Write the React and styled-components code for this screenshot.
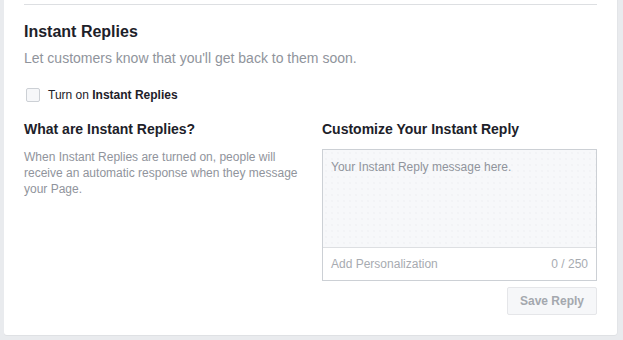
import React from 'react';
import styled, { createGlobalStyle } from 'styled-components';

const GlobalStyle = createGlobalStyle`
  html, body {
    margin: 0;
    padding: 0;
    background: #e9ebee;
  }

  body {
    font-family: "Liberation Sans", Arial, Helvetica, sans-serif;
    color: #1d2129;
  }
`;

const Page = styled.div`
  padding: 0 6px 6px 4px;
`;

const Card = styled.section`
  background: #fff;
  border-radius: 0 0 3px 3px;
  box-shadow: 1px 0 0 #e3e5e8, 0 1px 0 #dfe1e4;
  padding: 4px 20px 20px;
`;

const Divider = styled.hr`
  margin: 0;
  border: 0;
  border-top: 1px solid #dddfe2;
`;

const Title = styled.h2`
  margin: 17px 0 0;
  font-size: 16px;
  line-height: 20px;
  font-weight: bold;
`;

const Subtitle = styled.p`
  margin: 7px 0 0;
  font-size: 14px;
  line-height: 18px;
  color: #90949c;
`;

const Toggle = styled.label`
  display: flex;
  align-items: center;
  gap: 8px;
  margin: 20px 0 0 2px;
  height: 16px;
  font-size: 12px;
  line-height: 16px;
  color: #1d2129;

  b {
    font-weight: bold;
  }
`;

const Box = styled.span`
  width: 12px;
  height: 12px;
  border: 1px solid #ccd0d5;
  border-radius: 2px;
  background: #f6f7f9;
`;

const Columns = styled.div`
  display: grid;
  grid-template-columns: 1fr 275px;
  margin-top: 17px;
`;

const Heading = styled.h3`
  margin: 0 0 11px;
  font-size: 14px;
  line-height: 18px;
  font-weight: bold;
`;

const Description = styled.p`
  margin: 0;
  max-width: 280px;
  font-size: 12px;
  line-height: 16px;
  color: #90949c;
`;

const Editor = styled.div`
  border: 1px solid #ccd0d5;
  background: #fff;
`;

const Message = styled.div`
  height: 97px;
  padding: 9px 8px 0;
  box-sizing: border-box;
  background-color: #f7f8fa;
  background-image: radial-gradient(#eceef1 0.6px, transparent 0.8px);
  background-size: 6px 6px;
  font-size: 12px;
  line-height: 16px;
  color: #90949c;
`;

const Footer = styled.div`
  display: flex;
  justify-content: space-between;
  align-items: center;
  height: 32px;
  padding: 0 8px;
  border-top: 1px solid #dddfe2;
  font-size: 12px;
  color: #a7abb1;
`;

const Actions = styled.div`
  display: flex;
  justify-content: flex-end;
  margin-top: 6px;
`;

const Button = styled.button`
  width: 90px;
  height: 28px;
  border: 1px solid #e5e6e9;
  border-radius: 2px;
  background: #f6f7f9;
  font-family: inherit;
  font-size: 12px;
  font-weight: bold;
  color: #a4a8ae;
`;

const App = () => (
  <Page>
    <GlobalStyle />
    <Card>
      <Divider />
      <Title>Instant Replies</Title>
      <Subtitle>Let customers know that you'll get back to them soon.</Subtitle>
      <Toggle>
        <Box />
        <span>
          Turn on <b>Instant Replies</b>
        </span>
      </Toggle>
      <Columns>
        <div>
          <Heading>What are Instant Replies?</Heading>
          <Description>
            When Instant Replies are turned on, people will receive an automatic response when they
            message your Page.
          </Description>
        </div>
        <div>
          <Heading>Customize Your Instant Reply</Heading>
          <Editor>
            <Message>Your Instant Reply message here.</Message>
            <Footer>
              <span>Add Personalization</span>
              <span>0 / 250</span>
            </Footer>
          </Editor>
          <Actions>
            <Button>Save Reply</Button>
          </Actions>
        </div>
      </Columns>
    </Card>
  </Page>
);

export default App;
